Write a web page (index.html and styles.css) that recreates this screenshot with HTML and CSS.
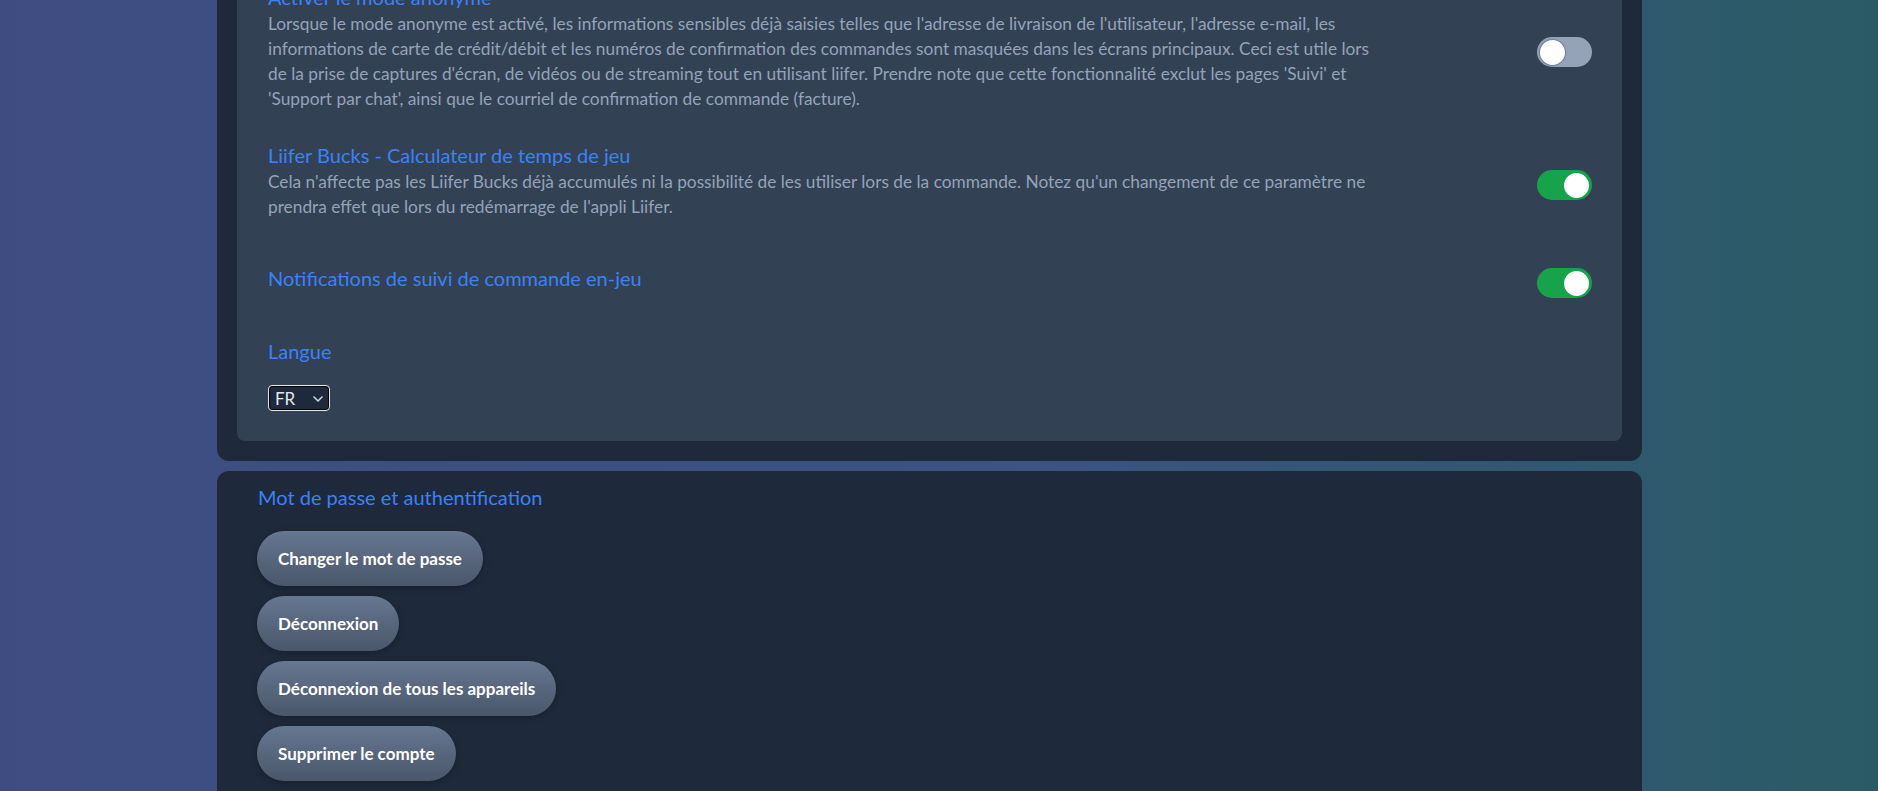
FILE: index.html
```html
<!DOCTYPE html>
<html lang="fr">
<head>
<meta charset="utf-8">
<title>Paramètres</title>
<link rel="stylesheet" href="styles.css">
</head>
<body>
<main class="page">
  <section class="card card-general">
    <div class="panel">
      <div class="setting">
        <div class="setting-text">
          <div class="setting-title">Activer le mode anonyme</div>
          <p class="setting-desc">Lorsque le mode anonyme est activé, les informations sensibles déjà saisies telles que l'adresse de livraison de l'utilisateur, l'adresse e-mail, les informations de carte de crédit/débit et les numéros de confirmation des commandes sont masquées dans les écrans principaux. Ceci est utile lors de la prise de captures d'écran, de vidéos ou de streaming tout en utilisant liifer. Prendre note que cette fonctionnalité exclut les pages 'Suivi' et 'Support par chat', ainsi que le courriel de confirmation de commande (facture).</p>
        </div>
        <div class="toggle"><span class="knob"></span></div>
      </div>
      <div class="setting">
        <div class="setting-text">
          <div class="setting-title">Liifer Bucks - Calculateur de temps de jeu</div>
          <p class="setting-desc">Cela n'affecte pas les Liifer Bucks déjà accumulés ni la possibilité de les utiliser lors de la commande. Notez qu'un changement de ce paramètre ne prendra effet que lors du redémarrage de l'appli Liifer.</p>
        </div>
        <div class="toggle on"><span class="knob"></span></div>
      </div>
      <div class="setting setting-short">
        <div class="setting-text">
          <div class="setting-title">Notifications de suivi de commande en-jeu</div>
        </div>
        <div class="toggle on"><span class="knob"></span></div>
      </div>
      <div class="language">
        <div class="setting-title">Langue</div>
        <div class="select-wrap">
          <select class="lang-select">
            <option>FR</option>
            <option>EN</option>
          </select>
          <svg class="chevron" width="10" height="6" viewBox="0 0 10 6" aria-hidden="true"><path d="M1 1l4 4 4-4" fill="none" stroke="#cbd5e1" stroke-width="1.6" stroke-linecap="round" stroke-linejoin="round"/></svg>
        </div>
      </div>
    </div>
  </section>

  <section class="card card-auth">
    <h2 class="auth-title">Mot de passe et authentification</h2>
    <div class="actions">
      <button class="btn">Changer le mot de passe</button>
      <button class="btn">Déconnexion</button>
      <button class="btn">Déconnexion de tous les appareils</button>
      <button class="btn">Supprimer le compte</button>
    </div>
  </section>
</main>
</body>
</html>
```

FILE: styles.css
```css
* {
  box-sizing: border-box;
}

html,
body {
  margin: 0;
  height: 100%;
}

body {
  font-family: Lato, "Noto Sans", sans-serif;
  background: linear-gradient(90deg, #3e4c82 0%, #3b5480 55%, #2a5b65 100%);
  overflow: hidden;
}

.page {
  width: 1642px;
  padding-left: 217px;
}

.card {
  background: #1e293b;
  border-radius: 12px;
}

.card-general {
  margin-top: -67px;
  padding: 20px;
}

.panel {
  background: #334155;
  border-radius: 8px;
  padding: 30px 30px 30px 31px;
}

.setting {
  display: flex;
  align-items: center;
  justify-content: space-between;
}

.setting + .setting {
  margin-top: 20px;
}

.setting-short {
  margin-top: 35px !important;
}

.setting-text {
  max-width: 1118px;
  padding-bottom: 10px;
}

.setting-title {
  color: #3b82f6;
  font-size: 20px;
  line-height: 28px;
}

.setting-desc {
  margin: 0;
  color: #94a3b8;
  font-size: 17.3px;
  line-height: 25px;
}

.toggle {
  flex-shrink: 0;
  display: flex;
  align-items: center;
  width: 55px;
  height: 30px;
  padding: 0 3px;
  border-radius: 15px;
  background: #94a3b8;
}

.toggle.on {
  justify-content: flex-end;
  background: #16a34a;
}

.knob {
  width: 25px;
  height: 25px;
  border-radius: 50%;
  background: #fff;
  box-shadow: 0 0 1px 1px rgba(71, 85, 140, 0.5);
}

.toggle.on .knob {
  box-shadow: none;
}

.language {
  margin-top: 35px;
}

.select-wrap {
  position: relative;
  display: inline-block;
  margin-top: 20px;
  vertical-align: top;
}

.lang-select {
  display: block;
  width: 62px;
  height: 26px;
  margin: 0;
  padding: 0 0 0 6px;
  appearance: none;
  -webkit-appearance: none;
  border: 1px solid #e2e8f0;
  border-radius: 4px;
  box-shadow: inset 0 0 0 1px #000;
  background: #1e293b;
  color: #e2e8f0;
  font-family: Lato, "Noto Sans", sans-serif;
  font-size: 17px;
}

.chevron {
  position: absolute;
  right: 7px;
  top: 11px;
  pointer-events: none;
}

.card-auth {
  margin-top: 10px;
  padding: 12px 40px 20px 40px;
  min-height: 340px;
}

.auth-title {
  margin: 0 0 20px 1px;
  color: #3b82f6;
  font-size: 20px;
  font-weight: 400;
  line-height: 28px;
}

.actions {
  display: flex;
  flex-direction: column;
  align-items: flex-start;
  gap: 10px;
}

.btn {
  display: inline-flex;
  align-items: center;
  height: 55px;
  padding: 0 21px;
  border: none;
  border-radius: 28px;
  background: linear-gradient(180deg, #667791 0%, #4a566a 100%);
  box-shadow: 0 2px 6px rgba(0, 0, 0, 0.25);
  color: #fff;
  font-family: Lato, "Noto Sans", sans-serif;
  font-size: 17px;
  font-weight: 700;
  cursor: pointer;
}
```
